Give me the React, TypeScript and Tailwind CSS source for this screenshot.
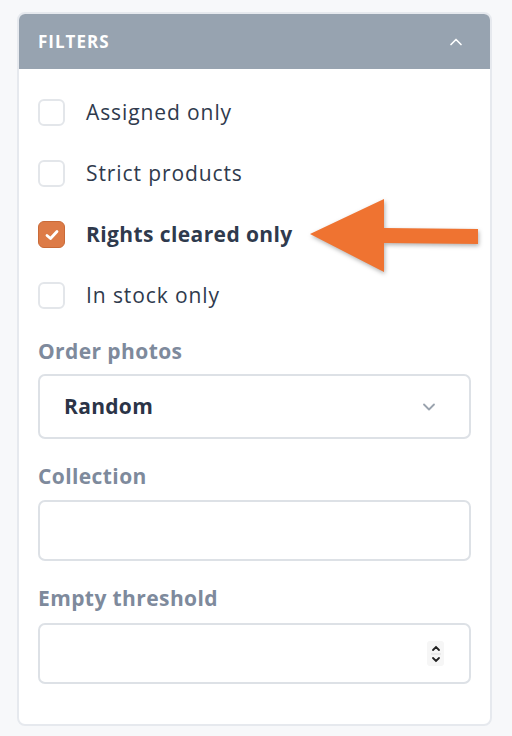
import { ChevronUp, ChevronDown } from "lucide-react";

const font = { fontFamily: "'Open Sans', Lato, sans-serif" };

const Check = ({ label, checked }: { label: string; checked?: boolean }) => (
  <div className="flex items-center h-[61px]">
    {checked ? (
      <div className="w-[27px] h-[27px] rounded-[6px] bg-[#dd7b47] border border-[#c96a38] flex items-center justify-center">
        <svg width="14" height="12" viewBox="0 0 14 12">
          <path d="M2 6.5 L5.5 9.5 L12 2.5" stroke="white" strokeWidth="2.8" fill="none" strokeLinecap="round" strokeLinejoin="round" />
        </svg>
      </div>
    ) : (
      <div className="w-[27px] h-[27px] rounded-[6px] bg-white border-2 border-[#e3e6ea]" />
    )}
    <span
      className={`ml-[21px] text-[21px] text-[#2f3a4d] ${
        checked ? "font-bold tracking-[0.4px]" : "font-normal tracking-[0.9px]"
      }`}
    >
      {label}
    </span>
  </div>
);

const Label = ({ children }: { children: string }) => (
  <div className="text-[21px] font-bold text-[#7e8a9c] h-[24px] leading-[24px] tracking-[0.4px]">{children}</div>
);

export default function App() {
  return (
    <div className="w-[512px] h-[736px] bg-[#f7f8fa] pt-[12px] px-[17px] relative" style={font}>
      <div className="w-[475px] h-[714px] bg-white border-2 border-[#e6e9ee] rounded-[8px] overflow-hidden">
        <div className="h-[55px] bg-[#97a3b0] flex items-center justify-between pl-[19px] pr-[24px]">
          <span className="text-white font-bold text-[17px] tracking-[1px]">FILTERS</span>
          <ChevronUp size={20} color="white" strokeWidth={2} />
        </div>
        <div className="px-[19px] pt-[13px]">
          <Check label="Assigned only" />
          <Check label="Strict products" />
          <Check label="Rights cleared only" checked />
          <Check label="In stock only" />
          <div className="mt-[13px]">
            <Label>Order photos</Label>
            <div className="mt-[11px] h-[65px] border-2 border-[#dde1e6] rounded-[7px] flex items-center justify-between pl-[24px] pr-[30px]">
              <span className="text-[21px] font-bold text-[#2b3447] tracking-[0.3px]">Random</span>
              <ChevronDown size={20} color="#9aa3ae" strokeWidth={2.2} />
            </div>
          </div>
          <div className="mt-[25px]">
            <Label>Collection</Label>
            <div className="mt-[12px] h-[61px] border-2 border-[#dde1e6] rounded-[7px]" />
          </div>
          <div className="mt-[25px]">
            <Label>Empty threshold</Label>
            <div className="mt-[13px] h-[61px] border-2 border-[#dde1e6] rounded-[7px] flex items-center justify-end pr-[25px]">
              <div className="w-[17px] h-[25px] rounded-[3px] bg-[#f6f6f6] flex flex-col items-center justify-center">
                <svg width="10" height="24" viewBox="0 0 10 24">
                  <path d="M2 8 L5 5 L8 8" stroke="#222" strokeWidth="1.8" fill="none" strokeLinecap="round" />
                  <line x1="0" y1="12" x2="10" y2="12" stroke="#ddd" strokeWidth="1" />
                  <path d="M2 16 L5 19 L8 16" stroke="#222" strokeWidth="1.8" fill="none" strokeLinecap="round" />
                </svg>
              </div>
            </div>
          </div>
        </div>
      </div>
      <svg
        className="absolute left-[306px] top-[194px]"
        width="180"
        height="84"
        viewBox="0 0 180 84"
        style={{ filter: "drop-shadow(1px 2px 2px rgba(0,0,0,0.3))" }}
      >
        <path d="M4 40 L78 5 L78 34 L172 35 L172 50 L78 49 L78 78 Z" fill="#ef7331" />
      </svg>
    </div>
  );
}
